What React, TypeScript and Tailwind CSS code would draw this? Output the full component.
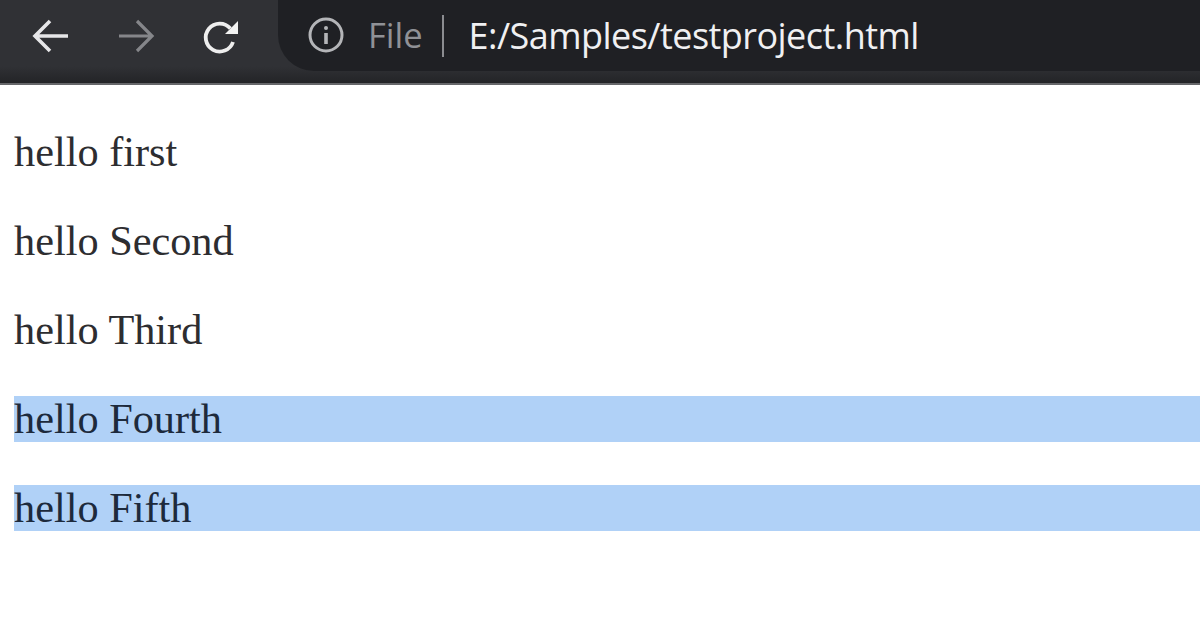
export default function App() {
  const rows = ["hello first", "hello Second", "hello Third", "hello Fourth", "hello Fifth"];
  return (
    <div className="h-[627px] w-[1200px] overflow-hidden bg-white">
      <div className="flex h-[85px] items-start border-b-2 border-[#66676a] bg-[#303135] bg-gradient-to-b from-[#303135] from-[80%] to-[#232427]">
        <div className="flex h-[71px] w-[278px] items-center pl-[31px] pt-[2px]">
          <svg width="40" height="40" viewBox="0 0 40 40" fill="none" stroke="#e6e6e8" strokeWidth="3.6" className="shrink-0">
            <path d="M37 19H5M19 4 4 19l15 15" />
          </svg>
          <svg width="40" height="40" viewBox="0 0 40 40" fill="none" stroke="#85868a" strokeWidth="3.2" className="ml-[45px] shrink-0">
            <path d="M3 19h32M21 4l15 15-15 15" />
          </svg>
          <svg width="40" height="40" viewBox="0 0 40 40" fill="none" className="ml-[45px] shrink-0">
            <path d="M32 25a14 14 0 1 1-2.6-13.5" stroke="#eeeeee" strokeWidth="3.8" />
            <path d="M37 4v13H24z" fill="#f2f2f2" />
          </svg>
        </div>
        <div className="flex h-[71px] flex-1 items-center rounded-bl-[36px] bg-[#1f2024] pl-[30px] font-['Open_Sans',sans-serif]">
          <svg width="38" height="38" viewBox="0 0 38 38" fill="none" className="shrink-0">
            <circle cx="18" cy="18" r="16" stroke="#b4b5b8" strokeWidth="3" />
            <circle cx="18" cy="11" r="2" fill="#b4b5b8" />
            <path d="M18 16v11" stroke="#b4b5b8" strokeWidth="3.6" />
          </svg>
          <span className="ml-[22px] text-[34.5px] leading-none text-[#8f9196]">File</span>
          <div className="ml-[19px] h-[42px] w-[2px] bg-[#8b8c90]" />
          <span className="ml-[25px] text-[36px] leading-none tracking-[-0.55px] text-[#f0f0f2]">E:/Samples/testproject.html</span>
        </div>
      </div>
      <div className="pt-[44px] font-['Liberation_Serif',serif] text-[42.3px] leading-[46px] text-[#2d2d30]">
        {rows.map((t, i) => (
          <div key={t} className={`mb-[43px] ml-[14px] ${i > 2 ? "bg-[#b0d1f7] text-[#1d2a3c]" : ""}`}>{t}</div>
        ))}
      </div>
    </div>
  );
}
